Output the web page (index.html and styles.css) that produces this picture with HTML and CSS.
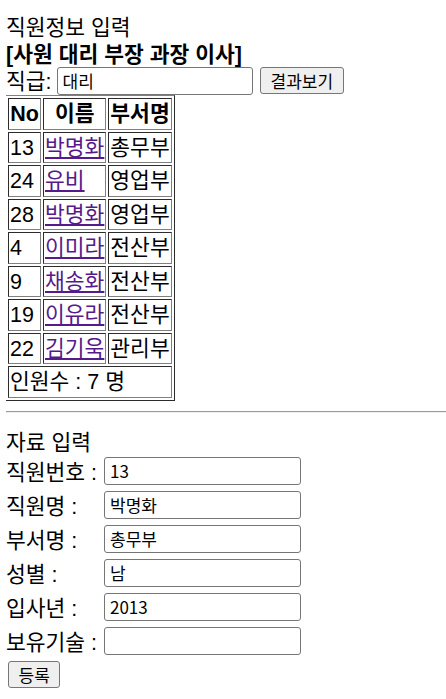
FILE: index.html
```html
<!DOCTYPE html>
<html lang="ko">
<head>
    <meta charset="UTF-8" />
    <meta name="viewport" content="width=device-width, initial-scale=1.0" />
    <title>직원정보 입력</title>
    <link rel="stylesheet" href="styles.css">
</head>
<body>

    <!-- 검색 -->
    <div class="line">직원정보 입력</div>
    <div class="line ranks">[사원 대리 부장 과장 이사]</div>
    <form class="search">
        <span class="search-label">직급:</span>
        <input type="text" class="search-input" value="대리">
        <button type="submit" class="search-btn">결과보기</button>
    </form>

    <table class="staff">
        <tr>
            <th class="col-no">No</th>
            <th>이름</th>
            <th>부서명</th>
        </tr>
        <tr><td>13</td><td><a href="#">박명화</a></td><td>총무부</td></tr>
        <tr><td>24</td><td><a href="#">유비</a></td><td>영업부</td></tr>
        <tr><td>28</td><td><a href="#">박명화</a></td><td>영업부</td></tr>
        <tr><td>4</td><td><a href="#">이미라</a></td><td>전산부</td></tr>
        <tr><td>9</td><td><a href="#">채송화</a></td><td>전산부</td></tr>
        <tr><td>19</td><td><a href="#">이유라</a></td><td>전산부</td></tr>
        <tr><td>22</td><td><a href="#">김기욱</a></td><td>관리부</td></tr>
        <tr><td colspan="3">인원수 : 7 명</td></tr>
    </table>

    <hr>

    <!-- 입력 -->
    <div class="line">자료 입력</div>
    <form class="entry">
        <div class="entry-row"><label>직원번호 :</label><input type="text" value="13"></div>
        <div class="entry-row"><label>직원명 :</label><input type="text" value="박명화"></div>
        <div class="entry-row"><label>부서명 :</label><input type="text" value="총무부"></div>
        <div class="entry-row"><label>성별 :</label><input type="text" value="남"></div>
        <div class="entry-row"><label>입사년 :</label><input type="text" value="2013"></div>
        <div class="entry-row"><label>보유기술 :</label><input type="text" value=""></div>
        <button type="submit" class="entry-btn">등록</button>
    </form>

</body>
</html>
```

FILE: styles.css
```css
* {
    box-sizing: border-box;
}

body {
    margin: 12px 0 0 6px;
    font-family: "Liberation Sans", "Noto Sans CJK KR", sans-serif;
    font-size: 21.5px;
    line-height: 27px;
    color: #000;
    background: #fff;
}

.line {
    height: 27px;
    padding-top: 3px;
}

.ranks {
    font-weight: bold;
}

input {
    font-family: "Noto Sans CJK KR", sans-serif;
    font-size: 17px;
    color: #000;
    background: #fff;
    border: 1px solid #767676;
    border-radius: 3px;
    padding: 0 5px;
    height: 28px;
    margin: 0;
}

button {
    font-family: "Noto Sans CJK KR", sans-serif;
    font-size: 17px;
    color: #000;
    background: #efefef;
    border: 1px solid #767676;
    border-radius: 3px;
    padding: 0 10px;
    height: 27px;
    margin: 0;
}

.search {
    display: flex;
    align-items: center;
    height: 29px;
    margin: 0;
}

.search-label {
    padding-top: 3px;
}

.search-input {
    width: 196px;
    margin-left: 5px;
}

.search-btn {
    margin-left: 7px;
}

.staff {
    border: 1px outset #808080;
    border-spacing: 2px;
    margin-left: -1px;
}

    .staff th, .staff td {
        border: 1px inset #808080;
        padding: 2px 1px 0;
        height: 31.5px;
        text-align: left;
    }

    .staff th {
        text-align: center;
        font-weight: bold;
    }

    .staff .col-no {
        width: 33px;
    }

    .staff a {
        color: #551a8b;
        text-decoration: underline;
    }

hr {
    height: 0;
    border: 0;
    border-top: 1px solid #9a9a9a;
    border-bottom: 1px solid #eeeeee;
    margin: 10px 0 14px -1px;
}

.entry {
    margin: 0;
}

.entry-row {
    display: grid;
    grid-template-columns: 98px 197px;
    align-items: center;
    height: 34px;
}

    .entry-row label {
        padding-top: 5px;
    }

.entry-btn {
    margin: 3px 0 0 2px;
    padding: 0 9.5px;
}
```
